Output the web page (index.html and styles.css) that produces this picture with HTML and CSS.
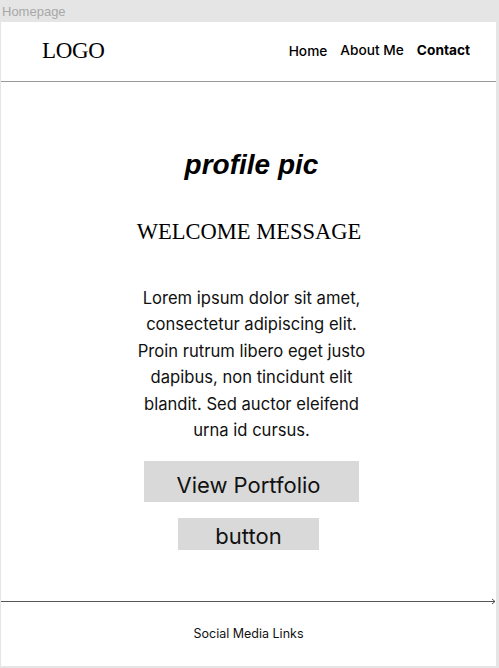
FILE: index.html
```html
<!DOCTYPE html>
<html>
<head>
<meta charset="utf-8">
<link rel="stylesheet" href="styles.css">
</head>
<body>
<div class="label">Homepage</div>
<div class="frame">
  <header class="header">
    <div class="logo">LOGO</div>
    <nav class="nav">
      <span class="nav-item nav-home">Home</span>
      <span class="nav-item">About Me</span>
      <span class="nav-item nav-bold">Contact</span>
    </nav>
  </header>
  <main class="main">
    <div class="profile">profile pic</div>
    <h1 class="welcome">WELCOME MESSAGE</h1>
    <p class="intro">Lorem ipsum dolor sit amet, consectetur adipiscing elit. Proin rutrum libero eget justo dapibus, non tincidunt elit blandit. Sed auctor eleifend urna id cursus.</p>
    <div class="btn btn-primary">View Portfolio</div>
    <div class="btn btn-secondary">button</div>
  </main>
  <div class="divider">
    <svg class="divider-svg" width="495" height="9" viewBox="0 0 495 9">
      <line x1="0" y1="4.5" x2="494" y2="4.5" stroke="#555" stroke-width="1"/>
      <path d="M491 2 L494 4.5 L491 7" fill="none" stroke="#555" stroke-width="1"/>
    </svg>
  </div>
  <footer class="footer">Social Media Links</footer>
</div>
</body>
</html>
```
FILE: styles.css
```css
html, body {
  margin: 0;
  padding: 0;
}
body {
  background: #e5e5e5;
  width: 499px;
  height: 668px;
  overflow: hidden;
  font-family: Inter, "Liberation Sans", sans-serif;
}
.label {
  height: 22px;
  line-height: 24px;
  padding-left: 2px;
  font-family: "Liberation Sans", Arial, sans-serif;
  font-size: 13px;
  color: #a8a8a8;
  overflow: visible;
}
.frame {
  margin-left: 1px;
  width: 495px;
  height: 644px;
  background: #fff;
  display: flex;
  flex-direction: column;
}
.header {
  height: 59px;
  border-bottom: 1px solid #9a9a9a;
  display: flex;
  align-items: center;
  justify-content: space-between;
  padding: 0 26px 0 41px;
}
.logo {
  font-family: "Liberation Serif", "Times New Roman", serif;
  font-size: 23px;
  color: #000;
  letter-spacing: -0.3px;
  margin-top: -1px;
}
.nav {
  display: flex;
  gap: 13px;
  align-items: center;
  margin-top: -4px;
}
.nav-item {
  font-size: 13.7px;
  font-weight: 500;
  color: #000;
}
.nav-home {
  margin-top: 2px;
}
.nav-bold {
  font-weight: 700;
}
.main {
  display: flex;
  flex-direction: column;
  align-items: center;
  flex: 1;
  padding-left: 6px;
}
.profile {
  font-family: "Liberation Sans", Arial, sans-serif;
  font-style: italic;
  font-weight: 700;
  font-size: 28px;
  margin-top: 67px;
  line-height: 32px;
}
.welcome {
  font-family: "Liberation Serif", "Times New Roman", serif;
  font-weight: 400;
  font-size: 22.5px;
  margin: 38px 5px 0 0;
  line-height: 26px;
  letter-spacing: 0;
}
.intro {
  width: 244px;
  margin: 40px 0 0;
  font-size: 16.6px;
  line-height: 26.4px;
  text-align: center;
  color: #111;
}
.btn {
  background: #d9d9d9;
  color: #111;
  font-size: 22px;
  display: flex;
  align-items: center;
  justify-content: center;
}
.btn-primary {
  width: 215px;
  height: 41px;
  margin-top: 18px;
  padding: 6px 6px 0 0;
  box-sizing: border-box;
}
.btn-secondary {
  width: 141px;
  height: 32px;
  margin: 16px 6px 0 0;
  padding-top: 4px;
  box-sizing: border-box;
}
.divider {
  height: 9px;
  margin-top: -3px;
}
.divider-svg {
  display: block;
}
.footer {
  height: 60px;
  display: flex;
  justify-content: center;
  align-items: center;
  font-size: 12.5px;
  color: #111;
  padding-bottom: 6px;
  box-sizing: border-box;
}
```
